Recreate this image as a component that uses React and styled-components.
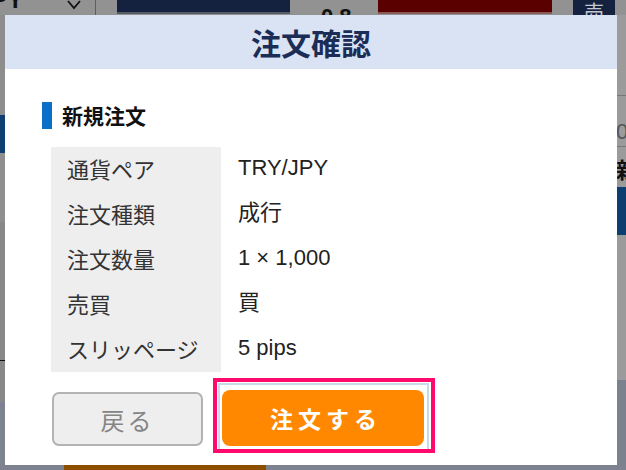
import React from "react";
import styled, { createGlobalStyle } from "styled-components";

const GlobalStyle = createGlobalStyle`
  html, body {
    margin: 0;
    padding: 0;
    background: #8e8e8e;
  }
  body {
    font-family: "Liberation Sans", "Noto Sans CJK JP", sans-serif;
  }
`;

const rows = [
    { label: "通貨ペア", value: "TRY/JPY" },
    { label: "注文種類", value: "成行" },
    { label: "注文数量", value: "1 × 1,000" },
    { label: "売買", value: "買" },
    { label: "スリッページ", value: "5 pips" },
];

const App = () => {
    return (
        <>
            <GlobalStyle />
            <Screen>
                <TopBar>
                    <Clip $w={28} $ml={-2}>
                        <PairText>JPY</PairText>
                    </Clip>
                    <Chevron viewBox="0 0 14 10">
                        <path d="M1 1 L7 8 L13 1" fill="none" stroke="#111" strokeWidth="1.8" />
                    </Chevron>
                    <Divider />
                    <PriceBox $bg="#14213f" $width={173} $ml={21} />
                    <Clip $w={30} $ml={31}>
                        <Spread>0.8</Spread>
                    </Clip>
                    <PriceBox $bg="#5a0000" $width={174} $ml={27} $edge="#8a5a5a" />
                    <SideTab>
                        <SideTabText>売</SideTabText>
                    </SideTab>
                </TopBar>

                <Middle>
                    <Rail $width={5}>
                        <RailPart $h={100} $bg="#8d8d8d" />
                        <RailPart $h={38} $bg="#0e3f70" />
                        <RailPart $h={69} $bg="#8f8f8f" />
                        <RailPart $h={138} $bg="#888888" />
                        <RailPart $h={1} $bg="#111" />
                        <RailPart $h={41} $bg="#888888" />
                        <RailPart $h={63} $bg="#7d8391" />
                    </Rail>

                    <Modal>
                        <Header>
                            <Title>注文確認</Title>
                        </Header>
                        <Body>
                            <SectionTitle>新規注文</SectionTitle>
                            <Table>
                                {rows.map((r) => (
                                    <Row key={r.label}>
                                        <Label>{r.label}</Label>
                                        <Value>{r.value}</Value>
                                    </Row>
                                ))}
                            </Table>
                            <Actions>
                                <BackButton>戻る</BackButton>
                                <Highlight>
                                    <FocusRing>
                                        <SubmitButton>注文する</SubmitButton>
                                    </FocusRing>
                                </Highlight>
                            </Actions>
                        </Body>
                    </Modal>

                    <Rail $width={9}>
                        <RailPart $h={80} $bg="#9b9b9b" />
                        <RailPart $h={1} $bg="#777" />
                        <RailPart $h={22} $bg="#9b9b9b" />
                        <RailPart $h={28} $bg="#9b9b9b">
                            <RailGlyph>0</RailGlyph>
                        </RailPart>
                        <RailPart $h={1} $bg="#777" />
                        <RailPart $h={10} $bg="#9b9b9b" />
                        <RailPart $h={30} $bg="#9b9b9b">
                            <RailGlyph $bold>新</RailGlyph>
                        </RailPart>
                        <RailPart $h={48} $bg="#0c3f70" />
                        <RailPart $h={145} $bg="#9b9b9b" />
                        <RailPart $h={85} $bg="#7c8190" />
                    </Rail>
                </Middle>

                <BottomBar>
                    <BottomTab />
                </BottomBar>
            </Screen>
        </>
    );
};

export default App;

const Screen = styled.div`
    width: 626px;
    height: 470px;
    overflow: hidden;
    display: flex;
    flex-direction: column;
    background: #8e8e8e;
`;

const TopBar = styled.div`
    height: 15px;
    flex-shrink: 0;
    display: flex;
    align-items: flex-start;
    overflow: hidden;
    background: #929292;
`;

const Clip = styled.div`
    width: ${(p) => p.$w}px;
    height: 15px;
    margin-left: ${(p) => p.$ml}px;
    overflow: hidden;
    flex-shrink: 0;
`;

const PairText = styled.div`
    margin-left: -20px;
    margin-top: -12px;
    font-size: 24px;
    font-weight: bold;
    line-height: 24px;
    color: #111;
`;

const Chevron = styled.svg`
    width: 14px;
    height: 10px;
    margin-left: 41px;
`;

const Divider = styled.div`
    width: 1px;
    height: 15px;
    margin-left: 14px;
    background: #5e5e5e;
`;

const PriceBox = styled.div`
    width: ${(p) => p.$width}px;
    height: 12px;
    margin-left: ${(p) => p.$ml}px;
    background: ${(p) => p.$bg};
    border-bottom: 2px solid ${(p) => p.$edge || "#555c66"};
`;

const Spread = styled.div`
    margin-top: 6px;
    font-size: 22px;
    font-weight: bold;
    line-height: 22px;
    color: #111;
`;

const SideTab = styled.div`
    width: 42px;
    height: 15px;
    margin-left: 21px;
    background: #14213f;
    overflow: hidden;
    display: flex;
    justify-content: center;
`;

const SideTabText = styled.div`
    color: #c4c8d2;
    font-size: 20px;
    line-height: 20px;
    margin-top: 3px;
`;

const Middle = styled.div`
    display: flex;
    height: 450px;
    flex-shrink: 0;
`;

const Rail = styled.div`
    width: ${(p) => p.$width}px;
    display: flex;
    flex-direction: column;
    overflow: hidden;
`;

const RailPart = styled.div`
    height: ${(p) => p.$h}px;
    flex-shrink: 0;
    background: ${(p) => p.$bg};
    overflow: hidden;
`;

const RailGlyph = styled.span`
    display: block;
    margin-left: -1px;
    font-size: 22px;
    line-height: 28px;
    font-weight: ${(p) => (p.$bold ? "bold" : "normal")};
    color: ${(p) => (p.$bold ? "#111" : "#555")};
`;

const Modal = styled.div`
    width: 612px;
    height: 450px;
    background: #fff;
    display: flex;
    flex-direction: column;
`;

const Header = styled.div`
    height: 54px;
    flex-shrink: 0;
    background: #d9e3f3;
    display: flex;
    align-items: center;
    justify-content: center;
`;

const Title = styled.h1`
    margin: 0;
    font-family: "Noto Sans CJK JP", sans-serif;
    font-size: 30px;
    font-weight: bold;
    line-height: 1;
    color: #1b2d57;
`;

const Body = styled.div`
    padding: 33px 0 0 46px;
    display: flex;
    flex-direction: column;
`;

const SectionTitle = styled.h2`
    margin: 0 0 0 -9px;
    height: 27px;
    padding-left: 10px;
    border-left: 10px solid #0a6fc7;
    font-family: "Noto Sans CJK JP", sans-serif;
    font-size: 21px;
    font-weight: bold;
    line-height: 27px;
    color: #111;
`;

const Table = styled.div`
    margin-top: 18px;
    display: flex;
    flex-direction: column;
`;

const Row = styled.div`
    display: flex;
    height: 45px;
`;

const Label = styled.div`
    width: 154px;
    padding: 0 0 3px 16px;
    background: #eeeeee;
    display: flex;
    align-items: center;
    font-family: "Noto Sans CJK JP", sans-serif;
    font-size: 22px;
    line-height: 1;
    color: #333;
`;

const Value = styled.div`
    padding: 0 0 3px 17px;
    display: flex;
    align-items: center;
    font-size: 22px;
    line-height: 1;
    color: #222;
`;

const Actions = styled.div`
    margin-top: 6px;
    display: flex;
    align-items: flex-start;
`;

const BackButton = styled.button`
    width: 151px;
    height: 54px;
    margin: 14px 0 0 1px;
    background: #eeeeee;
    border: 2px solid #b3b3b3;
    border-radius: 7px;
    font-family: "Noto Sans CJK JP", sans-serif;
    font-size: 24px;
    letter-spacing: 3px;
    color: #858585;
    cursor: pointer;
`;

const Highlight = styled.div`
    margin-left: 10px;
    box-sizing: border-box;
    width: 222px;
    height: 75px;
    border: 4px solid #ff0a6c;
    padding: 1px 2px 0 1px;
    background: #fff;
`;

const FocusRing = styled.div`
    height: 100%;
    box-sizing: border-box;
    border: 2px solid #c6dbea;
    border-bottom: none;
    padding: 5px 5px 0 2px;
`;

const SubmitButton = styled.button`
    width: 202px;
    height: 56px;
    background: #ff8800;
    border: none;
    border-radius: 8px;
    font-family: "Noto Sans CJK JP", sans-serif;
    font-size: 23px;
    font-weight: bold;
    letter-spacing: 5px;
    padding-left: 12px;
    color: #fff;
    cursor: pointer;
`;

const BottomBar = styled.div`
    height: 5px;
    flex-shrink: 0;
    background: #7c8290;
    display: flex;
`;

const BottomTab = styled.div`
    width: 202px;
    margin-left: 64px;
    background: #8c4f00;
`;
